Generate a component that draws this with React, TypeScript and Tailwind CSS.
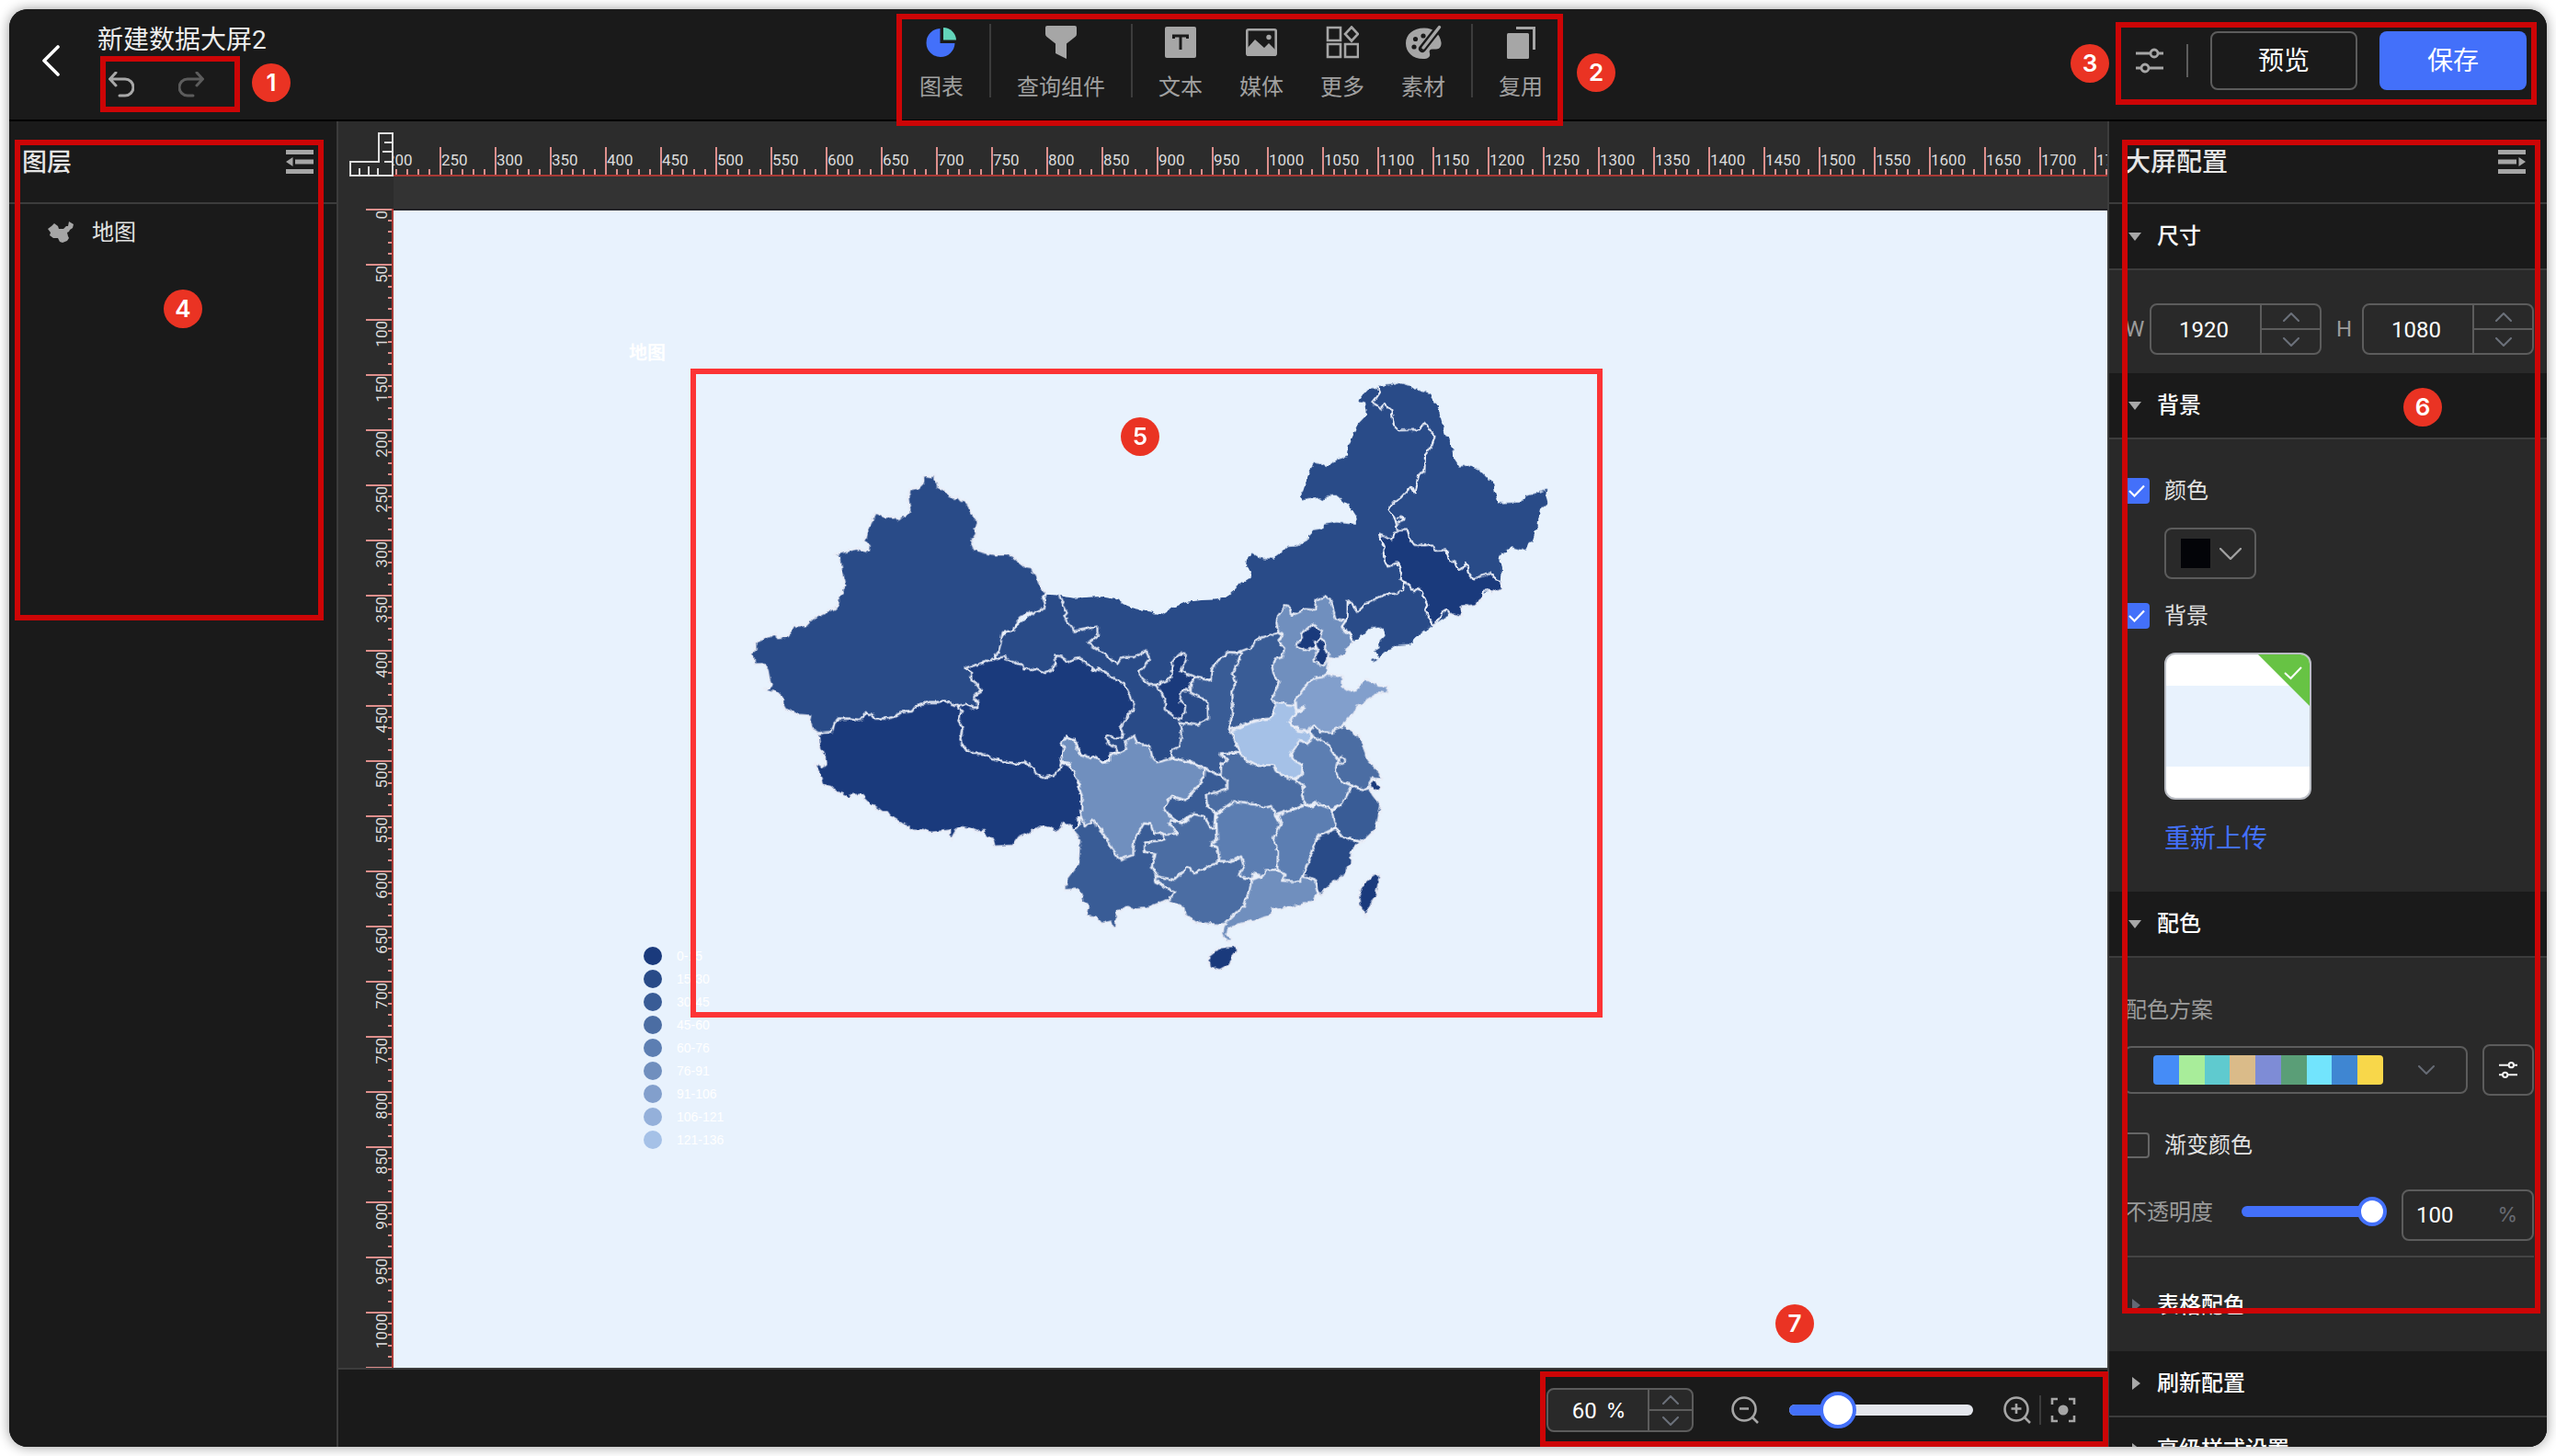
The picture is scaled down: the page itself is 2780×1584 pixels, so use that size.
import React from "react";

const C1 = "#1a3a7c";
const C2 = "#294b88";
const C3 = "#395c96";
const C4 = "#4b6da3";
const C5 = "#5c7eb2";
const C6 = "#708fbe";
const C7 = "#829fcc";
const C9 = "#a5c1e7";

const legend: [string, string][] = [
  ["bg-[#1a3a7c]", "0-15"],
  ["bg-[#294b88]", "15-30"],
  ["bg-[#395c96]", "30-45"],
  ["bg-[#4b6da3]", "45-60"],
  ["bg-[#5c7eb2]", "60-76"],
  ["bg-[#708fbe]", "76-91"],
  ["bg-[#829fcc]", "91-106"],
  ["bg-[#94b0da]", "106-121"],
  ["bg-[#a5c1e7]", "121-136"],
];

const palette = [
  "bg-[#458cf7]",
  "bg-[#a8ed9a]",
  "bg-[#5fcacf]",
  "bg-[#dabb89]",
  "bg-[#7e8cd6]",
  "bg-[#5a9e77]",
  "bg-[#72e4fd]",
  "bg-[#3f86d2]",
  "bg-[#f8d74a]",
];

const west: [string, string][] = [
  [C2, "383,369 455,350 492,357 494,342 481,330 492,290 503,265 514,233 545,246 580,247 592,256 605,245 621,240 628,228 622,180 629,157 655,152 668,140 673,128 672,115 680,111 700,115 711,110 709,124 719,140 719,147 742,160 752,174 770,185 785,182 795,194 808,196 819,205 829,235 845,253 848,268 842,288 846,302 834,320 832,335 840,353 875,364 910,370 945,370 960,373 985,392 1005,408 1027,412 1032,428 1042,434 1055,475 1075,495 1062,508 1070,530 1068,545 1040,556 1030,565 1024,556 990,575 970,605 966,618 932,624 925,660 917,690 905,700 908,710 820,738 812,744 828,750 830,780 848,795 862,815 840,828 838,840 852,850 853,868 840,870 810,860 800,868 780,862 760,855 740,847 720,852 690,852 650,862 636,882 600,886 575,900 560,905 515,905 505,892 485,888 465,910 440,906 395,905 383,920 375,948 330,952 310,940 301,910 304,896 265,893 222,875 215,862 212,835 200,825 185,817 150,811 172,803 178,797 170,778 165,750 160,735 150,727 122,728 118,705 110,692 125,680 124,657 135,652 150,645 192,627 195,640 230,637 240,625 248,602 290,601 310,580 340,565 388,542 395,530 395,505 408,492 405,485 418,470 415,455 405,420 401,380"],
  [C1, "908,710 940,702 942,712 965,718 975,726 995,728 1000,745 1030,743 1072,757 1090,750 1098,735 1105,728 1102,700 1120,702 1150,722 1160,712 1188,708 1210,730 1232,750 1245,742 1270,755 1280,768 1312,780 1330,795 1345,825 1350,845 1362,860 1357,880 1340,892 1330,915 1315,935 1325,955 1322,968 1300,970 1272,957 1266,968 1280,990 1300,1000 1312,1015 1285,1020 1280,1040 1262,1050 1225,1030 1215,1042 1185,1020 1165,972 1140,966 1122,985 1135,1005 1125,1025 1123,1050 1115,1075 1095,1090 1070,1097 1042,1088 1035,1072 1005,1046 985,1055 950,1048 905,1038 865,1020 835,1020 805,1000 793,975 800,935 787,915 797,880 782,868 810,860 840,870 853,868 852,850 838,840 840,828 862,815 848,795 830,780 828,750 812,744 820,738"],
  [C1, "330,955 375,948 383,920 395,905 440,906 465,910 485,888 505,892 515,905 560,905 575,900 600,886 636,882 650,862 690,852 720,852 740,847 780,862 797,880 787,915 800,935 793,975 805,1000 835,1020 865,1020 905,1038 950,1048 985,1055 1005,1046 1035,1072 1042,1088 1070,1097 1095,1090 1115,1075 1123,1050 1155,1060 1182,1105 1175,1120 1188,1150 1195,1215 1195,1230 1175,1225 1180,1255 1170,1270 1155,1258 1130,1245 1122,1262 1114,1278 1085,1262 1055,1258 1030,1272 1010,1285 985,1292 965,1320 905,1323 898,1300 880,1290 870,1272 850,1275 825,1265 795,1260 780,1268 770,1285 765,1303 758,1290 760,1270 735,1273 700,1278 670,1268 645,1272 605,1250 565,1225 555,1210 535,1210 500,1185 470,1155 440,1155 432,1168 420,1158 385,1142 370,1128 342,1120 333,1085 318,1050 340,1062 353,1052 350,1030 333,1000"],
];

const east: [string, string][] = [
  [C6, "870,150 885,130 895,115 908,118 912,148 930,142 960,128 990,130 995,97 1025,87 1040,98 1050,130 1058,160 1095,165 1078,190 1105,215 1115,235 1100,250 1090,278 1060,290 1040,285 1030,320 1028,340 1015,350 985,355 960,378 945,400 928,420 925,440 915,443 860,430 848,420 858,405 873,365 855,340 850,315 860,290 885,285 890,255 868,232 885,215 870,200 865,170"],
  [C1, "945,205 965,195 982,178 1000,190 1015,200 1010,225 990,235 992,255 955,262 932,252 935,232 948,225"],
  [C1, "1010,225 1025,235 1022,262 1035,270 1032,295 1020,312 990,300 988,285 1000,262 990,235"],
  [C7, "1030,338 1060,343 1080,345 1078,380 1100,395 1125,390 1150,360 1165,360 1195,378 1232,380 1225,403 1200,400 1160,425 1150,440 1130,445 1115,470 1085,500 1080,515 1055,520 1050,532 1025,530 1010,530 990,507 975,515 972,525 935,525 928,510 905,500 935,465 958,450 930,455 928,420 945,400 960,378 985,355 1015,350"],
  [C9, "860,430 925,443 930,465 905,500 935,525 975,530 982,550 965,568 940,555 930,575 912,600 920,620 950,635 948,670 915,682 880,668 862,655 855,637 795,637 765,620 745,595 725,550 720,525 780,500 850,478"],
  [C3, "750,265 790,250 800,225 870,205 885,215 868,232 890,255 885,285 860,290 850,315 855,340 873,365 858,405 848,420 860,430 855,470 845,485 790,492 710,522 720,470 718,400 730,370 722,340 740,300"],
  [C3, "750,265 735,270 708,268 680,290 655,320 650,360 600,352 585,370 585,400 640,430 642,485 605,505 550,500 555,540 550,575 520,590 525,615 580,625 630,648 683,670 685,635 705,620 680,598 745,597 725,550 710,522 720,470 718,400 730,370 722,340 740,300"],
  [C1, "470,375 520,355 525,300 545,275 565,272 570,290 552,330 600,350 585,370 583,392 555,395 550,430 568,445 565,465 545,490 500,455 502,430 490,400"],
  [C6, "160,625 172,580 160,562 178,545 205,555 222,600 260,615 270,608 300,630 322,625 322,598 345,600 375,585 370,560 400,540 410,565 450,573 460,610 475,628 530,615 580,628 632,650 630,672 610,705 590,725 570,752 520,738 500,778 515,800 540,815 515,830 542,855 520,868 495,860 465,862 455,830 432,828 400,885 398,930 355,945 330,912 300,862 265,815 240,840 228,800 230,740 218,690 190,635"],
  [C3, "632,650 683,672 705,690 705,715 635,735 640,770 665,795 662,840 650,842 630,805 595,797 545,825 515,800 500,778 520,738 570,752 590,725 610,705 630,672"],
  [C4, "432,890 490,882 500,865 542,860 515,830 520,818 560,828 595,797 630,805 650,842 668,840 672,880 650,900 672,905 678,940 672,960 630,975 600,990 575,970 530,1012 475,1000 458,965 470,925 432,920"],
  [C3, "230,805 240,840 265,815 300,862 330,912 355,945 398,930 400,885 432,828 455,830 465,862 495,860 500,880 432,890 432,920 470,925 458,965 475,1000 468,1018 500,1035 535,1050 525,1070 500,1082 455,1098 435,1105 405,1108 380,1100 345,1115 342,1165 330,1165 325,1148 295,1155 275,1133 245,1128 252,1095 232,1080 222,1042 175,1045 180,1010 218,960 222,880 200,850 215,845"],
  [C4, "468,1010 475,1000 530,1012 575,970 600,990 680,950 720,950 750,935 758,970 740,997 785,1012 778,1040 760,1095 720,1130 700,1155 670,1158 600,1150 565,1125 562,1100 510,1080 535,1050 500,1035"],
  [C5, "668,800 725,755 760,758 830,775 855,770 860,800 880,830 855,875 870,920 868,978 830,980 820,1000 790,990 785,1010 740,997 758,970 750,935 720,950 680,950 672,905 650,895 672,880"],
  [C4, "683,598 745,597 765,620 795,637 855,637 862,655 880,668 915,682 925,685 955,710 948,735 960,765 890,790 862,800 850,770 830,775 760,758 725,755 668,795 640,770 635,735 705,715 705,690 683,672 685,635 705,620"],
  [C5, "870,800 960,768 985,775 990,760 1045,780 1060,840 1000,870 975,940 950,1000 940,1018 885,1015 895,995 868,978 870,920 855,875 880,830"],
  [C5, "975,530 1040,570 1045,590 1065,620 1058,655 1075,690 1110,705 1080,765 1045,780 990,760 960,768 948,735 955,710 925,685 948,670 950,635 920,620 912,600 930,575 940,555 965,568 985,550"],
  [C4, "990,507 1010,530 1050,532 1055,520 1088,508 1135,543 1150,580 1165,620 1200,660 1207,683 1175,680 1165,710 1150,718 1110,700 1075,690 1058,655 1065,620 1045,590 1040,570 985,545 972,525"],
  [C3, "1110,705 1150,718 1168,712 1180,735 1207,770 1200,800 1190,845 1165,870 1145,888 1110,878 1080,875 1060,840 1045,790 1080,765"],
  [C1, "1172,690 1190,686 1208,712 1185,721 1166,710"],
  [C2, "1060,845 1080,875 1140,888 1110,920 1108,960 1080,1000 1045,1025 1010,1060 998,1050 990,1010 950,998 975,940 1000,870"],
  [C6, "785,1010 820,1000 830,980 868,978 895,995 885,1015 940,1018 950,1000 990,1010 998,1055 985,1080 940,1095 870,1108 850,1103 845,1130 790,1145 740,1158 710,1170 703,1190 717,1205 710,1215 698,1210 688,1190 692,1165 700,1150 760,1095 778,1040"],
  [C1, "642,1262 680,1232 730,1226 740,1238 722,1262 718,1285 680,1306 648,1297"],
  [C1, "1190,988 1203,995 1190,1065 1160,1115 1158,1135 1135,1095 1132,1065 1150,1020"],
];

const northBase =
  "115,80 155,83 200,92 290,87 345,97 365,112 420,133 462,138 465,145 487,147 520,127 570,105 620,99 680,97 720,80 750,45 785,22 775,0 1270,0 1110,228 1000,300 900,480 700,560 530,615 475,628 300,590 -50,290 -50,230 5,195 70,140 105,120";
const northeastBase =
  "0,822 30,815 50,803 85,768 125,745 122,735 105,705 108,690 125,665 150,680 195,684 220,665 240,645 270,643 308,622 310,605 325,590 358,585 360,572 400,565 440,570 465,568 463,545 440,510 415,488 400,476 370,478 352,495 335,485 290,493 280,480 290,465 305,420 327,368 372,384 405,360 438,350 440,315 458,275 470,245 498,215 500,200 495,172 472,168 485,150 505,128 535,126 540,120 590,115 607,110 635,118 655,133 685,136 705,145 718,165 732,190 740,220 755,275 770,300 778,330 785,360 800,382 830,380 868,395 900,428 912,430 918,470 930,502 1000,500 1020,480 1050,470 1090,458 1085,480 1090,500 1065,520 1058,570 1040,625 1030,632 1020,658 970,645 955,660 930,675 942,715 938,760 715,900 700,910 660,940 642,962 600,965 570,980 540,1005 525,985 542,975 540,955 560,935 555,915 540,905 510,907 490,930 470,945 455,950 220,1000 0,1040";
const jilin =
  "540,605 560,612 580,622 588,600 605,590 633,590 640,620 655,638 690,640 708,637 725,657 760,655 768,690 785,695 800,722 812,715 825,697 830,725 848,752 870,738 890,732 905,730 920,750 938,760 938,780 910,795 900,785 882,785 878,812 850,835 808,842 813,872 775,865 762,850 745,860 735,880 715,900 700,870 690,850 697,835 680,795 670,780 655,790 640,770 622,760 607,750 612,730 600,697 568,712 558,690 553,655 558,645";

function ChinaMap() {
  return (
    <svg className="absolute left-[352px] top-[151px]" width="940" height="720" viewBox="0 -300 2820 2160">
      <defs>
        <filter id="coast" x="0" y="0" width="100%" height="100%" colorInterpolationFilters="sRGB">
          <feTurbulence type="fractalNoise" baseFrequency="0.055" numOctaves="2" seed="4" result="n" />
          <feDisplacementMap in="SourceGraphic" in2="n" scale="15" xChannelSelector="R" yChannelSelector="G" />
        </filter>
      </defs>
      <g filter="url(#coast)" stroke="#e9edf7" strokeWidth="6.500" strokeLinejoin="round">
        <polygon points={northBase} fill={C2} stroke="none" transform="translate(960 420)" />
        <polygon points={northeastBase} fill={C2} stroke="none" transform="translate(1620 -300)" />
        {west.map(([f, p], i) => (
          <polygon key={i} points={p} fill={f} />
        ))}
        <g transform="translate(960 420)">
          {east.map(([f, p], i) => (
            <polygon key={i} points={p} fill={f} />
          ))}
          <polyline fill="none" points="155,83 182,140 172,152 205,200 280,185 282,215 250,240 300,270 345,308 360,285 400,285 440,265 450,290 418,330 420,350 450,375 470,375" />
          <polyline fill="none" points="600,350 650,360 655,320 680,290 708,268 735,270 750,265" />
          <circle cx="1078" cy="622" r="11" fill={C4} />
          <polyline points="1178,298 1192,292" stroke={C2} />
        </g>
        <g transform="translate(1620 -300)">
          <polygon points={jilin} fill={C1} />
          <polyline fill="none" points="535,122 543,140 530,160 517,175 545,195 558,180 580,198 588,250 605,265 670,262 688,240 722,285 712,315 690,345 688,402 670,408 655,470 645,447 610,485 580,505 570,520 590,550 597,575 598,590" />
          <polyline fill="none" points="597,552 612,545 620,556 598,566" />
          <polyline fill="none" points="622,760 618,785 600,797 560,800 500,828 470,857 450,828 437,822 437,870 432,885 418,905 440,925 455,948" />
        </g>
      </g>
    </svg>
  );
}

function Badge({ n, at }: { n: number; at: string }) {
  return (
    <div className={`absolute z-20 flex size-[42px] items-center justify-center rounded-full bg-[#ea3323] font-[Inter] text-[26px] leading-none font-semibold text-white ${at}`}>
      {n}
    </div>
  );
}

function Frame({ at }: { at: string }) {
  return <div className={`absolute z-10 border-6 border-[#cd0506] ${at}`} />;
}

function Chevron({ w, h, up, color, sw = 2 }: { w: number; h: number; up?: boolean; color: string; sw?: number }) {
  return (
    <svg width={w} height={h} viewBox={`0 0 ${w} ${h}`} fill="none" stroke={color} strokeWidth={sw} strokeLinecap="round" strokeLinejoin="round">
      <path d={up ? `M1 ${h - 1}L${w / 2} 1L${w - 1} ${h - 1}` : `M1 1L${w / 2} ${h - 1}L${w - 1} 1`} />
    </svg>
  );
}

function Stepper({ value, className, cell }: { value: React.ReactNode; className: string; cell: string }) {
  return (
    <div className={`flex shrink-0 overflow-hidden rounded-lg border-2 border-[#5c5c5c] bg-[#292929] text-2xl text-white ${className}`}>
      <div className="flex flex-1 items-center justify-center pt-0.5 pr-1">{value}</div>
      <div className={`flex flex-col border-l-2 border-[#5c5c5c] ${cell}`}>
        <div className="flex flex-1 items-center justify-center border-b-2 border-[#5c5c5c]">
          <Chevron w={18} h={10} up color="#6c717b" />
        </div>
        <div className="flex flex-1 items-center justify-center">
          <Chevron w={18} h={10} color="#6c717b" />
        </div>
      </div>
    </div>
  );
}

function Sliders({ color, size = 30, sw = 3 }: { color: string; size?: number; sw?: number }) {
  return (
    <svg width={size} height={size} viewBox="0 0 30 30" fill="none" stroke={color} strokeWidth={sw}>
      <path d="M0 7H16M24 7H30M0 23H6M14 23H30" />
      <circle cx="20" cy="7" r="4" />
      <circle cx="10" cy="23" r="4" />
    </svg>
  );
}

function SectionHeader({ label, open = true }: { label: string; open?: boolean }) {
  return (
    <div className="flex h-[72px] shrink-0 items-center border-b-2 border-[#3c3c3c] bg-[#1a1a1a] pl-[21px] text-2xl font-medium text-white">
      <svg width="14" height="14" viewBox="0 0 14 14" fill="#a8a8a8">
        <path d={open ? "M0 3H14L7 12Z" : "M4 0L13 7L4 14Z"} />
      </svg>
      <span className="ml-[17px]">{label}</span>
    </div>
  );
}

function Checkbox({ label, checked }: { label: string; checked?: boolean }) {
  return (
    <div className="flex h-7 items-center gap-4 text-2xl text-[#e2e2e2]">
      {checked ? (
        <div className="flex size-7 items-center justify-center rounded bg-[#4370fa]">
          <svg width="18" height="14" viewBox="0 0 18 14" fill="none" stroke="#fff" strokeWidth="2.200">
            <path d="M1 7L6.500 12.500L17 1.500" />
          </svg>
        </div>
      ) : (
        <div className="size-7 rounded border-2 border-[#666]" />
      )}
      <span>{label}</span>
    </div>
  );
}

function Tool({ label, w, children }: { label: string; w: string; children: React.ReactNode }) {
  return (
    <div className={`flex flex-col items-center ${w}`}>
      <div className="flex h-10 shrink-0 items-center">{children}</div>
      <div className="mt-[11px] shrink-0 text-2xl leading-9 text-[#a0a0a0]">{label}</div>
    </div>
  );
}

const G = "#a6a6a6";

function Header() {
  return (
    <header className="flex h-[122px] shrink-0 border-b-2 border-black bg-[#1a1a1a]">
      <div className="flex w-[962px] shrink-0">
        <svg className="mt-[39px] ml-9" width="20" height="34" viewBox="0 0 20 34" fill="none" stroke="#fff" strokeWidth="3.600" strokeLinecap="round" strokeLinejoin="round">
          <path d="M17 2L2 17L17 32" />
        </svg>
        <div className="ml-10">
          <div className="mt-3.5 text-[28px] leading-10 text-[#eee]">新建数据大屏2</div>
          <div className="mt-3.5 ml-3 flex gap-[48px]">
            <svg width="28" height="28" viewBox="0 0 28 28" fill="none" stroke="#a8a8a8" strokeWidth="3" strokeLinecap="round">
              <path d="M8 1L1.500 8L8 15M2 8H18A9 9 0 0 1 18 26H12" />
            </svg>
            <svg width="28" height="28" viewBox="0 0 28 28" fill="none" stroke="#5c5c5c" strokeWidth="3" strokeLinecap="round">
              <path d="M20 1L26.500 8L20 15M26 8H10A9 9 0 0 0 10 26H16" />
            </svg>
          </div>
        </div>
      </div>
      <div className="mt-4 flex h-20 shrink-0">
        <Tool label="图表" w="w-[104px]">
          <svg width="34" height="34" viewBox="0 0 34 34">
            <path d="M15.500 2A15.500 15.500 0 1 0 31.500 18H15.500Z" fill="#4370fa" />
            <path d="M19 1A14 14 0 0 1 33 14.500H19Z" fill="#63d5ba" />
          </svg>
        </Tool>
        <div className="w-0.5 bg-[#3c3c3c]" />
        <Tool label="查询组件" w="w-[152px]">
          <svg width="34" height="36" viewBox="0 0 34 36" fill={G}>
            <path d="M2 0H32Q34 0 34 2V9Q34 11 32.500 12L23 19.500V36L11 30V19.500L1.500 12Q0 11 0 9V2Q0 0 2 0Z" />
          </svg>
        </Tool>
        <div className="w-0.5 bg-[#3c3c3c]" />
        <div className="flex px-2">
          <Tool label="文本" w="w-[88px]">
            <svg width="34" height="34" viewBox="0 0 34 34">
              <rect width="34" height="34" rx="2" fill={G} />
              <path d="M9.500 13V10H24.500V13M17 10V25" fill="none" stroke="#1a1a1a" strokeWidth="3" />
            </svg>
          </Tool>
          <Tool label="媒体" w="w-[88px]">
            <svg width="34" height="30" viewBox="0 0 34 30">
              <rect x="1.300" y="1.300" width="31.400" height="27.400" rx="1.500" fill="none" stroke={G} strokeWidth="2.600" />
              <path d="M2 21L10 12L20 21L25 16L32 23V28H2Z" fill={G} />
              <circle cx="25" cy="9.500" r="2.700" fill={G} />
            </svg>
          </Tool>
          <Tool label="更多" w="w-[88px]">
            <svg width="36" height="36" viewBox="0 0 36 36" fill="none" stroke={G} strokeWidth="2.600">
              <path d="M2 2H16V16H2ZM2 20H16V34H2ZM21 20H35V34H21ZM28 1.500L35 9L28 16.500L21 9Z" />
            </svg>
          </Tool>
          <Tool label="素材" w="w-[88px]">
            <svg width="40" height="38" viewBox="0 0 40 38">
              <path d="M21 3.500C9 3.500 1 10.500 1 20C1 29.500 8 37 20 37C25 37 28 35 27 31C26 28 27 26.500 30 26.500H34C38 26.500 40 23 39.500 19C38 10 32 3.500 21 3.500Z" fill={G} />
              <g fill="#1a1a1a">
                <circle cx="10" cy="24" r="2.600" />
                <circle cx="11.500" cy="15.500" r="2.600" />
                <circle cx="20" cy="12" r="2.600" />
              </g>
              <path d="M37.500 2.500L19 26" stroke="#1a1a1a" strokeWidth="8" strokeLinecap="round" />
              <path d="M37.500 2.500L20 25" stroke={G} strokeWidth="3.400" strokeLinecap="round" />
            </svg>
          </Tool>
        </div>
        <div className="w-0.5 bg-[#3c3c3c]" />
        <Tool label="复用" w="w-[104px]">
          <svg width="31" height="35" viewBox="0 0 31 35">
            <rect y="7" width="24" height="28" rx="1.500" fill={G} />
            <path d="M10 1.500H29.500V25" fill="none" stroke={G} strokeWidth="3" />
          </svg>
        </Tool>
      </div>
      <div className="mt-6 mr-[22px] ml-auto flex h-16 items-center">
        <Sliders color={G} sw={2.800} />
        <div className="ml-[25px] h-9 w-0.5 bg-[#5c5c5c]" />
        <button className="ml-6 h-16 w-40 rounded-lg border-2 border-[#5c5c5c] pt-0.5 text-[28px] leading-none text-white">预览</button>
        <button className="ml-6 h-16 w-40 rounded-lg bg-[#4370fa] pt-0.5 text-[28px] leading-none text-white">保存</button>
      </div>
    </header>
  );
}

function LeftPanel() {
  return (
    <aside className="w-[358px] shrink-0 border-r-2 border-[#3c3c3c] bg-[#1a1a1a]">
      <div className="flex h-[90px] items-center border-b-2 border-[#3c3c3c] pr-[25px] pl-3.5 text-[27px] font-medium text-[#e6e6e6]">
        <span className="pt-0.5">图层</span>
        <svg className="ml-auto" width="30" height="26" viewBox="0 0 30 26" fill={G}>
          <path d="M0 0H30V5H0ZM10 10.500H30V15.500H10ZM0 21H30V26H0ZM0 13L7.500 8V18Z" />
        </svg>
      </div>
      <div className="flex h-[61px] items-center pl-[42px] text-2xl text-[#e2e2e2]">
        <svg width="28" height="24" viewBox="0 0 28 24" fill={G}>
          <path d="M0 8L4 5L7 2L11 5L12 8L17 8L20 5L22 5L23 0L28 3L27 7L24 9L23 11L21 12L22 16L23 18L21 21L16 23L13 22L11 18L6 18L2 15L3 12Z" />
        </svg>
        <span className="ml-5">地图</span>
      </div>
    </aside>
  );
}

const hTicks = Array.from({ length: 32 }, (_, i) => 200 + i * 50);
const vTicks = Array.from({ length: 22 }, (_, i) => i * 50);

function Workspace() {
  return (
    <main className="flex w-[1924px] shrink-0 flex-col">
      <div className="flex h-[60px] shrink-0 bg-[#2c2c2c]">
        <div className="flex w-[60px] shrink-0 items-end justify-end">
          <svg width="48" height="48" viewBox="0 0 48 48" fill="none" stroke="#dedede" strokeWidth="2">
            <path d="M1 32H32V1H47V47H1ZM38 11H47M36 21H47M38 32H47M11 47V39M21 47V37M31 47V39" />
          </svg>
        </div>
        <div className="flex flex-1 items-end overflow-hidden border-b-2 border-[#a83a36]">
          <div className="-ml-[10px] flex">
            {hTicks.map((v) => (
              <div key={v} className="flex h-[30px] w-[60px] shrink-0 flex-col border-l-2 border-[#de8f8c]">
                <div className="h-6 pt-[5px] text-[17px] leading-[18px] text-[#dcdcdc]">{v}</div>
                <div className="flex h-1.5 pl-2.5">
                  {[1, 2, 3, 4].map((k) => (
                    <div key={k} className="h-1.5 w-3 border-l-2 border-[#de8f8c]" />
                  ))}
                </div>
              </div>
            ))}
          </div>
        </div>
      </div>
      <div className="flex h-[1296px] shrink-0">
        <div className="w-[60px] shrink-0 overflow-hidden bg-[#2c2c2c] pt-[35px] pl-[30px]">
          <div className="h-[1261px] overflow-hidden border-r-2 border-[#a83a36]">
            {vTicks.map((v) => (
              <div key={v} className="-mr-0.5 flex h-[60px] border-t-2 border-[#de8f8c]">
                <div className="flex w-6 justify-end">
                  <span className="-mr-[3px] h-fit rotate-180 text-[17px] leading-[20px] text-[#dcdcdc] [writing-mode:vertical-rl]">{v}</span>
                </div>
                <div className="w-1.5 pt-2.5">
                  {[1, 2, 3, 4].map((k) => (
                    <div key={k} className="h-3 w-1.5 border-t-2 border-[#de8f8c]" />
                  ))}
                </div>
              </div>
            ))}
          </div>
        </div>
        <div className="flex-1 bg-[#333] pt-[35px]">
          <div className="relative h-[1261px] overflow-hidden border-t-2 border-[#242428] bg-[#e8f2fd]">
            <div className="absolute top-[142px] left-[256px] text-[20px] leading-[26px] font-bold text-white">地图</div>
            <ChinaMap />
            <div className="absolute top-[798px] left-[272px] font-['Liberation_Sans'] text-sm text-white">
              {legend.map(([c, t]) => (
                <div key={t} className="flex h-[25px] items-center gap-4">
                  <span className={`size-5 rounded-full ${c}`} />
                  <span>{t}</span>
                </div>
              ))}
            </div>
          </div>
        </div>
      </div>
      <div className="flex h-[86px] shrink-0 items-center border-t-2 border-[#3c3c3c] bg-[#1a1a1a] pr-[35px] pb-0.5 pl-[1314px]">
        <Stepper
          className="mt-1.5 h-12 w-40"
          cell="w-12"
          value={
            <span className="flex items-center gap-2.5 pl-1.5">
              <span>60</span>
              <span className="font-[Inter] text-[22px]">%</span>
            </span>
          }
        />
        <svg className="mt-1.5 ml-[41px] shrink-0" width="30" height="30" viewBox="0 0 30 30" fill="none" stroke={G} strokeWidth="2.600">
          <circle cx="14" cy="14" r="12.500" />
          <path d="M9 13.500H19M22.500 22.500L29 29" />
        </svg>
        <div className="relative mt-1.5 ml-[33px] h-3 w-[200px] shrink-0 rounded-full bg-[#e4e6ec]">
          <div className="h-3 w-[53px] rounded-l-full bg-[#4370fa]" />
          <div className="absolute -top-3.5 left-[33px] size-10 rounded-full border-4 border-[#4370fa] bg-white" />
        </div>
        <svg className="mt-1.5 ml-[33px] shrink-0" width="30" height="30" viewBox="0 0 30 30" fill="none" stroke={G} strokeWidth="2.600">
          <circle cx="14" cy="14" r="12.500" />
          <path d="M8.500 13.500H19.500M14 8V19M22.500 22.500L29 29" />
        </svg>
        <div className="mt-1.5 ml-[9px] h-8 w-0.5 shrink-0 bg-[#3c3c3c]" />
        <svg className="mt-1.5 ml-2.5 shrink-0" width="28" height="28" viewBox="0 0 28 28" fill="none" stroke={G} strokeWidth="2.600">
          <path d="M8 2H2V8M20 2H26V8M8 26H2V20M20 26H26V20" />
          <circle cx="14" cy="14" r="5.500" fill={G} stroke="none" />
        </svg>
      </div>
    </main>
  );
}

function RightPanel() {
  return (
    <aside className="flex flex-1 flex-col overflow-hidden border-l-2 border-[#3c3c3c] bg-[#292929]">
      <div className="flex h-[90px] shrink-0 items-center border-b-2 border-[#3c3c3c] bg-[#1a1a1a] pr-[23px] pl-[17px] text-[28px] font-medium text-[#e6e6e6]">
        <span className="pt-0.5">大屏配置</span>
        <svg className="ml-auto" width="30" height="26" viewBox="0 0 30 26" fill={G}>
          <path d="M0 0H30V5H0ZM0 10.500H20V15.500H0ZM0 21H30V26H0ZM30 13L22.500 8V18Z" />
        </svg>
      </div>

      <SectionHeader label="尺寸" />
      <div className="flex h-28 shrink-0 items-center pt-4 pl-[17px] text-2xl text-[#9b9b9b]">
        <span className="w-[27px]">W</span>
        <Stepper className="h-14 w-[187px]" cell="w-[65px]" value="1920" />
        <span className="w-[44px] pl-[16px]">H</span>
        <Stepper className="h-14 w-[187px]" cell="w-[65px]" value="1080" />
      </div>

      <SectionHeader label="背景" />
      <div className="h-[492px] shrink-0 pt-[42px] pl-4">
        <Checkbox label="颜色" checked />
        <div className="mt-[26px] ml-11 flex h-14 w-[100px] items-center rounded-lg border-2 border-[#5c5c5c] pl-4">
          <div className="mr-2.5 size-8 bg-[#030408]" />
          <Chevron w={24} h={13} color="#a0a0a0" sw={2.400} />
        </div>
        <div className="mt-[26px]">
          <Checkbox label="背景" checked />
        </div>
        <div className="relative mt-[26px] ml-11 size-40 overflow-hidden rounded-xl border-2 border-[#babdc4] bg-white pt-[34px]">
          <div className="h-[88px] bg-[#e8f2fd]" />
          <svg className="absolute top-0 right-0" width="56" height="56" viewBox="0 0 56 56">
            <path d="M0 0H56V56Z" fill="#67c344" />
            <path d="M29 20L35.500 26L47 14" fill="none" stroke="#fff" strokeWidth="2" />
          </svg>
        </div>
        <div className="mt-[23px] ml-11 text-[28px] leading-10 text-[#4370fa]">重新上传</div>
      </div>

      <SectionHeader label="配色" />
      <div className="h-[428px] shrink-0 pt-[39px] pl-4">
        <div className="pl-px text-2xl leading-9 text-[#9b9b9b]">配色方案</div>
        <div className="mt-[19px] flex items-center gap-4">
          <div className="flex h-[52px] w-[374px] items-center rounded-lg border-2 border-[#5c5c5c] pl-[30px]">
            <div className="flex h-8 w-[250px] overflow-hidden rounded">
              {palette.map((c) => (
                <div key={c} className={`flex-1 ${c}`} />
              ))}
            </div>
            <div className="ml-[38px]">
              <Chevron w={18} h={10} color="#666b75" />
            </div>
          </div>
          <div className="flex size-14 items-center justify-center rounded-lg border-2 border-[#5c5c5c]">
            <Sliders color="#f2f2f2" size={20} sw={3} />
          </div>
        </div>
        <div className="mt-10">
          <Checkbox label="渐变颜色" />
        </div>
        <div className="mt-[34px] flex h-14 items-center">
          <span className="-mt-1.5 w-32 pl-px text-2xl text-[#9b9b9b]">不透明度</span>
          <div className="relative -mt-2 h-3 w-[156px] rounded-full bg-[#4370fa]">
            <div className="absolute -top-2.5 -right-0.5 size-8 rounded-full border-4 border-[#4370fa] bg-white" />
          </div>
          <div className="ml-[18px] flex h-14 w-36 items-center justify-between rounded-lg border-2 border-[#5c5c5c] pr-4 pl-3.5 text-2xl text-white">
            <span>100</span>
            <span className="font-[Inter] text-[22px] text-[#686b73]">%</span>
          </div>
        </div>
        <div className="mt-4 w-[446px] border-t-2 border-[#444]" />
        <div className="mt-[34px] flex items-center pl-[5px] text-2xl leading-9 font-medium text-white">
          <svg width="14" height="14" viewBox="0 0 14 14" fill="#646974">
            <path d="M4 0L13 7L4 14Z" />
          </svg>
          <span className="ml-[17px]">表格配色</span>
        </div>
      </div>

      <SectionHeader label="刷新配置" open={false} />
      <SectionHeader label="高级样式设置" open={false} />
    </aside>
  );
}

export default function App() {
  return (
    <div className="relative h-[1584px] w-[2780px] overflow-hidden bg-white p-2.5 font-[Roboto,'Noto_Sans_CJK_SC',sans-serif]">
      <div className="flex h-[1564px] w-[2760px] flex-col overflow-hidden rounded-[20px] bg-[#1a1a1a] shadow-[0_0_14px_rgba(0,0,0,0.4)]">
        <Header />
        <div className="flex h-[1442px] shrink-0 overflow-hidden">
          <LeftPanel />
          <Workspace />
          <RightPanel />
        </div>
      </div>

      <Frame at="left-[109px] top-[61px] w-[152px] h-[61px]" />
      <Frame at="left-[975px] top-[15px] w-[725px] h-[122px]" />
      <Frame at="left-[2301px] top-[24px] w-[458px] h-[90px]" />
      <Frame at="left-[16px] top-[152px] w-[336px] h-[523px]" />
      <Frame at="left-[2308px] top-[152px] w-[455px] h-[1277px]" />
      <Frame at="left-[1675px] top-[1492px] w-[618px] h-[82px]" />
      <div className="absolute top-[401px] left-[751px] z-10 h-[706px] w-[992px] border-6 border-[#fc3435]" />

      <Badge n={1} at="left-[274px] top-[69px]" />
      <Badge n={2} at="left-[1715px] top-[58px]" />
      <Badge n={3} at="left-[2252px] top-[48px]" />
      <Badge n={4} at="left-[178px] top-[315px]" />
      <Badge n={5} at="left-[1219px] top-[454px]" />
      <Badge n={6} at="left-[2614px] top-[422px]" />
      <Badge n={7} at="left-[1931px] top-[1419px]" />
    </div>
  );
}
